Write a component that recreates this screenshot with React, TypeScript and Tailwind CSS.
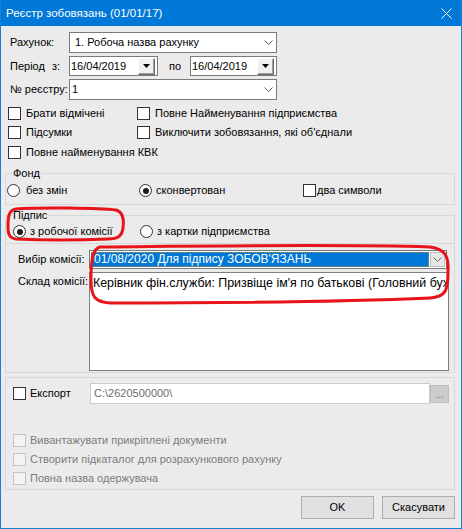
import React from 'react';

const Chevron = () => (
  <svg width="9" height="5" viewBox="0 0 9 5">
    <path d="M0.5 0.5 L4.5 4.5 L8.5 0.5" stroke="#606060" fill="none" strokeWidth="1" />
  </svg>
);

const Check = ({ disabled = false }: { disabled?: boolean }) => (
  <span
    className={`block w-[13px] h-[13px] shrink-0 border ${
      disabled ? 'border-[#c4c4c4] bg-[#f3f3f3]' : 'border-[#333333] bg-white'
    }`}
  />
);

const Radio = ({ checked = false }: { checked?: boolean }) => (
  <span className="flex w-[13px] h-[13px] shrink-0 items-center justify-center rounded-full border border-[#333333] bg-white">
    {checked && <span className="block w-[6px] h-[6px] rounded-full bg-[#1e1e1e]" />}
  </span>
);

const DateBox = ({ value, width }: { value: string; width: string }) => (
  <div className={`flex h-[20px] ${width} items-center justify-between border border-[#7a7a7a] bg-white pl-[1px] pr-[2px]`}>
    <span>{value}</span>
    <span className="flex h-[17px] w-[17px] items-center justify-center border border-t-white border-l-white border-r-[#6a6a6a] border-b-[#6a6a6a] bg-[#f0f0f0] shadow-[inset_-1px_-1px_0_#a0a0a0]">
      <svg width="7" height="4" viewBox="0 0 7 4">
        <path d="M0 0 H7 L3.5 4 Z" fill="#000" />
      </svg>
    </span>
  </div>
);

const Group = ({ caption, className, children }: { caption?: string; className: string; children: React.ReactNode }) => (
  <div className={`relative border border-[#d8d8d8] ${className}`}>
    {caption && (
      <span className="absolute left-[6px] top-[-8px] bg-[#ebebeb] px-[1px] leading-[14px]">{caption}</span>
    )}
    {children}
  </div>
);

export default function App() {
  return (
    <div className="relative h-[529px] w-[462px] overflow-hidden border-x border-b border-[#1a80d6] bg-[#ebebeb] text-[11px] leading-[13px] text-black font-['Liberation_Sans',Arial,sans-serif]">
      {/* title bar */}
      <div className="flex h-[26px] items-center justify-between bg-[#0078d7] pl-[5px] pr-[9px] text-[11.5px] text-white">
        <span>Реєстр зобовязань (01/01/17)</span>
        <svg width="11" height="11" viewBox="0 0 11 11">
          <path d="M0.5 0.5 L10.5 10.5 M10.5 0.5 L0.5 10.5" stroke="#fff" strokeWidth="1" />
        </svg>
      </div>

      {/* top fields */}
      <div className="pl-[9px] pt-[6px]">
        <div className="flex h-[21px] items-center">
          <span className="w-[59px]">Рахунок:</span>
          <div className="flex h-[21px] w-[208px] items-center justify-between border border-[#7a7a7a] bg-white pl-[5px] pr-[3px]">
            <span>1. Робоча назва рахунку</span>
            <Chevron />
          </div>
        </div>
        <div className="mt-[3px] flex h-[20px] items-center">
          <span className="flex w-[59px]">
            <span>Період</span>
            <span className="ml-[7px]">з:</span>
          </span>
          <DateBox value="16/04/2019" width="w-[89px]" />
          <span className="w-[32px] pl-[11px]">по</span>
          <DateBox value="16/04/2019" width="w-[87px]" />
        </div>
        <div className="mt-[3px] flex h-[21px] items-center">
          <span className="w-[59px]">№ реєстру:</span>
          <div className="flex h-[21px] w-[208px] items-center justify-between border border-[#7a7a7a] bg-white pl-[2px] pr-[3px]">
            <span>1</span>
            <Chevron />
          </div>
        </div>
      </div>

      {/* option checkboxes */}
      <div className="mt-[7px] flex flex-col gap-[6px] pl-[7px]">
        <div className="flex">
          <label className="flex w-[129px] items-center gap-[5px]"><Check />Брати відмічені</label>
          <label className="flex items-center gap-[5px]"><Check />Повне Найменування підприємства</label>
        </div>
        <div className="flex">
          <label className="flex w-[129px] items-center gap-[5px]"><Check />Підсумки</label>
          <label className="flex items-center gap-[5px]"><Check />Виключити зобовязання, які об'єднали</label>
        </div>
        <label className="mt-[1px] flex items-center gap-[5px]"><Check />Повне найменування КВК</label>
      </div>

      <div className="w-[454px] pl-[4px]">
        {/* Фонд */}
        <Group caption="Фонд" className="mt-[14px] h-[32px]">
          <div className="flex pl-[1px] pt-[10px]">
            <label className="flex w-[132px] items-center gap-[6px]"><Radio />без змін</label>
            <label className="flex w-[164px] items-center gap-[4px]"><Radio checked />сконвертован</label>
            <label className="flex items-center gap-[1px]"><Check />два символи</label>
          </div>
        </Group>

        {/* Підпис */}
        <Group caption="Підпис" className="mt-[10px] flex h-[158px] flex-col">
          <div className="flex pl-[7px] pt-[9px]">
            <label className="flex w-[127px] items-center gap-[4px]"><Radio checked />з робочої комісії</label>
            <label className="flex items-center gap-[4px]"><Radio />з картки підприємства</label>
          </div>
          <div className="mt-[5px] flex flex-1 flex-col border-t border-[#d8d8d8] pt-[6px] pb-[1px]">
            <div className="flex h-[19px] items-center">
              <span className="w-[83px] pl-[12px]">Вибір комісії:</span>
              <div className="flex h-[19px] w-[358px] items-center border border-[#7a7a7a] bg-white p-[1px]">
                <div className="flex h-full flex-1 items-center border border-dotted border-[#c08a30] bg-[#0078d7] pl-[2px] text-[12px] text-white">
                  01/08/2020 Для підпису ЗОБОВ'ЯЗАНЬ
                </div>
                <span className="ml-[1px] flex h-full w-[15px] items-center justify-center border border-[#bdbdbd] bg-[#e8e8e8]">
                  <Chevron />
                </span>
              </div>
            </div>
            <div className="mt-[3px] flex flex-1">
              <span className="w-[83px] pl-[12px] pt-[3px]">Склад комісії:</span>
              <div className="w-[360px] overflow-hidden whitespace-nowrap border border-[#7f7f7f] bg-white pl-[3px] pt-[3px] text-[12.4px] leading-[14px]">
                Керівник фін.служби: Призвіще ім'я по батькові (Головний бухгалтер)
              </div>
            </div>
          </div>
        </Group>

        {/* Експорт */}
        <Group className="mt-[4px] h-[113px]">
          <div className="flex h-[21px] items-center pl-[7px] mt-[5px]">
            <label className="flex w-[77px] items-center gap-[4px]"><Check />Експорт</label>
            <div className="flex h-[21px] w-[340px] items-center border border-[#cccccc] bg-white pl-[3px] text-[#6d6d6d]">
              C:\2620500000\
            </div>
            <span className="flex h-[18px] w-[19px] items-end justify-center border border-[#bfbfbf] bg-[#cccccc] pb-[2px] text-[10px] leading-[10px] text-[#7a7a7a]">
              ...
            </span>
          </div>
          <div className="mt-[30px] flex flex-col gap-[6px] pl-[7px] text-[#7c7c7c]">
            <label className="flex items-center gap-[4px]"><Check disabled />Вивантажувати прикріплені документи</label>
            <label className="flex items-center gap-[4px]"><Check disabled />Створити підкаталог для розрахункового рахунку</label>
            <label className="flex items-center gap-[4px]"><Check disabled />Повна назва одержувача</label>
          </div>
        </Group>

        <div className="mt-[6px] flex justify-end gap-[8px]">
          <button className="h-[23px] w-[73px] border border-[#adadad] bg-[#e1e1e1]">OK</button>
          <button className="h-[23px] w-[73px] border border-[#adadad] bg-[#e1e1e1]">Скасувати</button>
        </div>
      </div>

      {/* red markup drawn over the dialog */}
      <svg className="pointer-events-none absolute left-[-1px] top-0" width="462" height="529" viewBox="0 0 462 529">
        <path
          d="M16 209 C 40 207, 100 208, 116 210 C 123 212, 124 220, 123 228 C 122 236, 118 239, 108 239 C 80 240, 40 240, 16 239 C 9 238, 8 234, 8 226 C 8 216, 9 210, 16 209 Z"
          stroke="#e8141c" strokeWidth="3" fill="none"
        />
        <path
          d="M100 247 C 200 246, 340 244, 430 247 C 445 249, 449 256, 448 272 C 448 290, 446 297, 430 298 C 340 302, 200 303, 110 303 C 95 302, 91 297, 91 280 C 91 262, 92 249, 100 247 Z"
          stroke="#e8141c" strokeWidth="3" fill="none"
        />
      </svg>
    </div>
  );
}
